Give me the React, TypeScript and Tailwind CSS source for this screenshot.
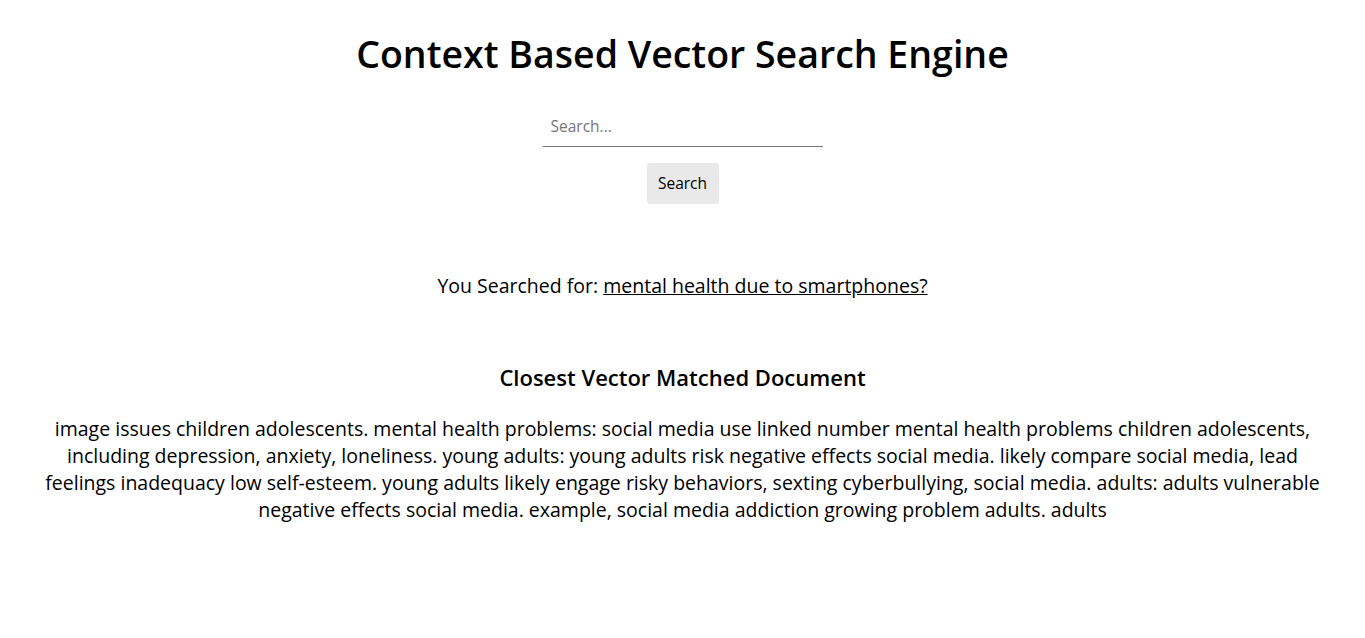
export default function App() {
  const doc =
    "image issues children adolescents. mental health problems: social media use linked number mental health problems children adolescents, including depression, anxiety, loneliness. young adults: young adults risk negative effects social media. likely compare social media, lead feelings inadequacy low self-esteem. young adults likely engage risky behaviors, sexting cyberbullying, social media. adults: adults vulnerable negative effects social media. example, social media addiction growing problem adults. adults";

  return (
    <div
      className="min-h-screen bg-white text-black flex flex-col items-center"
      style={{ fontFamily: '"Open Sans", "Noto Sans", sans-serif' }}
    >
      <h1 className="mt-[30px] text-[37.5px] leading-[48px] font-semibold">
        Context Based Vector Search Engine
      </h1>

      <input
        type="text"
        placeholder="Search..."
        className="mt-[27px] w-[280px] h-[42px] px-2 text-[15.5px] border-b border-[#777] outline-none placeholder:text-[#757575]"
      />

      <button className="mt-[16px] w-[72px] h-[41px] rounded-[3px] bg-[#e9e9e9] text-[15.5px]">
        Search
      </button>

      <p className="mt-[68px] text-[19.5px] leading-[27px]">
        You Searched for: <span className="underline">mental health due to smartphones?</span>
      </p>

      <h3 className="mt-[63px] text-[22px] leading-[30px] font-semibold">
        Closest Vector Matched Document
      </h3>

      <p className="mt-[23px] px-[40px] text-center text-[19.5px] leading-[27px]">{doc}</p>
    </div>
  );
}
